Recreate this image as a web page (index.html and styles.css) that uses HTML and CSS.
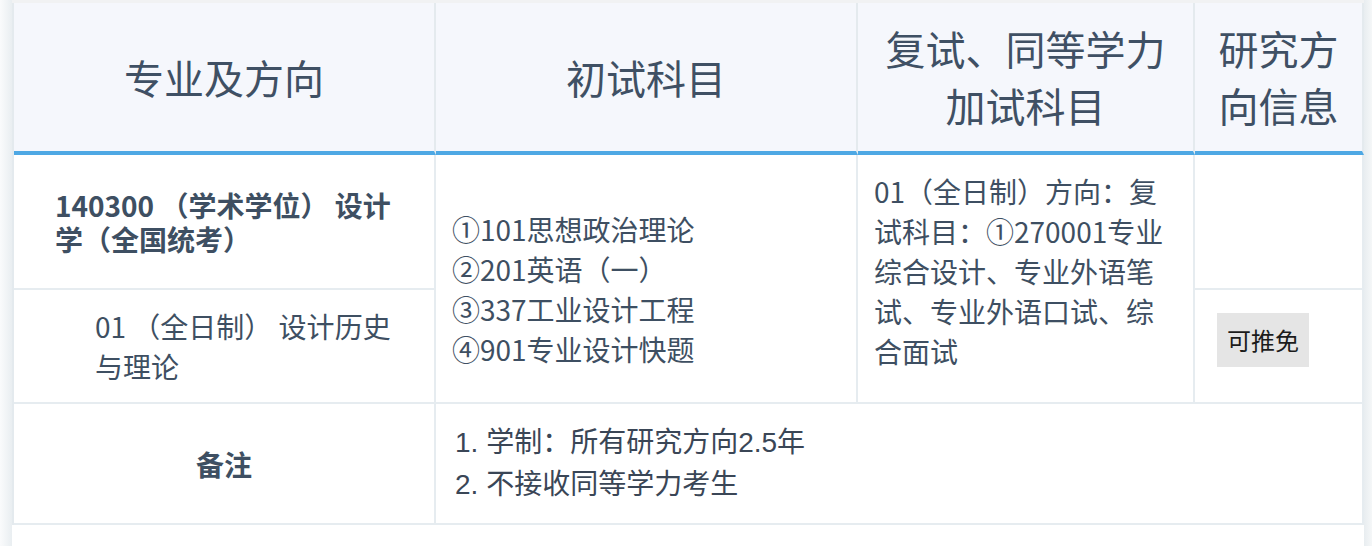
FILE: index.html
```html
<!DOCTYPE html>
<html lang="zh-CN">
<head>
<meta charset="utf-8">
<title>专业目录</title>
<link rel="stylesheet" href="styles.css">
</head>
<body>
<div class="page">
  <div class="shade-l"></div>
  <div class="sheet">
    <table class="plan">
      <colgroup><col class="c1"><col class="c2"><col class="c3"><col class="c4"></colgroup>
      <thead>
        <tr><th>专业及方向</th><th>初试科目</th><th>复试、同等学力加试科目</th><th>研究方向信息</th></tr>
      </thead>
      <tbody>
        <tr class="r1">
          <td class="major">140300 （学术学位） 设计学（全国统考）</td>
          <td class="exam" rowspan="2">①101思想政治理论<br>②201英语（一）<br>③337工业设计工程<br>④901专业设计快题</td>
          <td class="retest" rowspan="2">01（全日制）方向：复试科目：①270001专业综合设计、专业外语笔试、专业外语口试、综合面试</td>
          <td class="info"></td>
        </tr>
        <tr class="r2">
          <td class="dir">01 （全日制） 设计历史与理论</td>
          <td class="info tagcell"><span class="tag">可推免</span></td>
        </tr>
        <tr class="r3">
          <td class="note-label">备注</td>
          <td class="note" colspan="3">1. 学制：所有研究方向2.5年<br>2. 不接收同等学力考生</td>
        </tr>
      </tbody>
    </table>
  </div>
  <div class="shade-r"></div>
</div>
</body>
</html>
```
FILE: styles.css
```css
body {
  margin: 0;
  background: #ffffff;
  font-family: "Noto Sans CJK SC", sans-serif;
}

.page {
  display: flex;
  height: 546px;
  overflow: hidden;
}

.shade-l {
  flex: 0 0 12px;
  background: linear-gradient(to right, #fafbfc, #e9eef1);
}

.sheet {
  flex: 0 0 1352px;
  border-top: 3px solid #f1f2f3;
}

.shade-r {
  flex: 1 1 auto;
  background: linear-gradient(to right, #e8edf0, #f5f7f8);
}

.plan {
  table-layout: fixed;
  width: 1352px;
  border-collapse: separate;
  border-spacing: 0;
  border-left: 2px solid #e4eaee;
  color: #3e4f62;
  font-size: 28px;
  line-height: 40px;
}

.c1, .c2 { width: 422px; }
.c3 { width: 337px; }
.c4 { width: 169px; }

.plan th {
  background: #f5f7fc;
  font-weight: 400;
  font-size: 40px;
  line-height: 57px;
  padding: 17px 20px;
  text-align: center;
  vertical-align: middle;
  color: #3f5064;
  border-right: 2px solid #e4eaee;
  border-bottom: 4px solid #4ea8e4;
}

.plan td {
  padding: 16px;
  text-align: left;
  vertical-align: top;
  border-right: 2px solid #e6ecf0;
  border-bottom: 2px solid #e6ecf0;
}

.r1 { height: 135px; }
.r2 { height: 114px; }
.r3 { height: 121px; }

.plan td.major {
  font-weight: 700;
  line-height: 34px;
  padding: 16px 33px 16px 41px;
  vertical-align: middle;
}

.plan td.dir {
  padding: 16px 33px 16px 81px;
}

.plan td.exam {
  padding-top: 54px;
}

.plan td.tagcell {
  padding: 23px 16px 16px 22px;
}

.tag {
  display: inline-block;
  vertical-align: top;
  background: #e5e5e5;
  color: #1c1c1c;
  font-size: 24px;
  line-height: 34px;
  padding: 10px;
}

.plan td.note-label {
  font-weight: 700;
  text-align: center;
  vertical-align: middle;
}

.plan td.note {
  vertical-align: middle;
  padding-left: 19px;
  line-height: 42px;
  color: #3a4656;
  font-family: "Liberation Sans", "Noto Sans CJK SC", sans-serif;
}
```
